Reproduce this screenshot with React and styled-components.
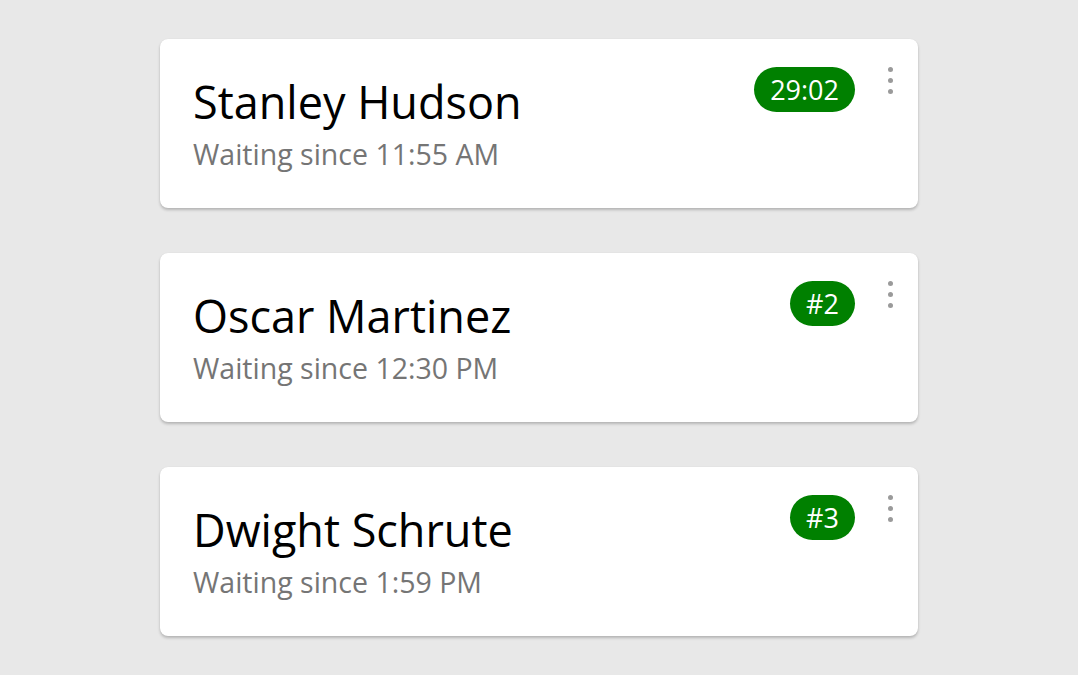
import React from "react";
import styled, { createGlobalStyle } from "styled-components";

const Global = createGlobalStyle`
  html, body { margin: 0; padding: 0; background: #e8e8e8; }
  body { font-family: "Open Sans", "Noto Sans", sans-serif; }
`;

const Page = styled.main`
  display: flex;
  flex-direction: column;
  align-items: center;
  gap: 45px;
  padding: 39px 0;
`;

const Card = styled.article`
  box-sizing: border-box;
  width: 758px;
  height: 169px;
  background: #fff;
  border-radius: 8px;
  box-shadow: 0 2px 3px rgba(0, 0, 0, 0.22), 0 0 1px rgba(0, 0, 0, 0.08);
  display: flex;
  align-items: flex-start;
  padding: 28px 16px 0 33px;
`;

const Info = styled.div`
  flex: 1;
  padding-top: 7px;
`;

const Name = styled.div`
  font-size: 45px;
  line-height: 56px;
  color: #000;
`;

const Since = styled.div`
  margin-top: 6px;
  font-size: 28.5px;
  line-height: 36px;
  color: #757575;
`;

const Badge = styled.span`
  box-sizing: border-box;
  height: 45px;
  padding: 0 16px;
  border-radius: 23px;
  background: #008000;
  color: #fff;
  font-size: 27px;
  line-height: 45px;
  display: inline-flex;
  align-items: center;
`;

const Menu = styled.button`
  margin-left: 23px;
  width: 24px;
  height: 40px;
  padding: 0;
  border: 0;
  background: none;
  display: flex;
  flex-direction: column;
  align-items: center;
  gap: 6px;
  cursor: pointer;
`;

const Dot = styled.span`
  width: 5px;
  height: 5px;
  border-radius: 50%;
  background: #9a9a9a;
`;

const items = [
  { name: "Stanley Hudson", time: "11:55 AM", badge: "29:02" },
  { name: "Oscar Martinez", time: "12:30 PM", badge: "#2" },
  { name: "Dwight Schrute", time: "1:59 PM", badge: "#3" },
];

export default function App() {
  return (
    <>
      <Global />
      <Page>
        {items.map((it) => (
          <Card key={it.name}>
            <Info>
              <Name>{it.name}</Name>
              <Since>Waiting since {it.time}</Since>
            </Info>
            <Badge>{it.badge}</Badge>
            <Menu aria-label="More options">
              <Dot />
              <Dot />
              <Dot />
            </Menu>
          </Card>
        ))}
      </Page>
    </>
  );
}
